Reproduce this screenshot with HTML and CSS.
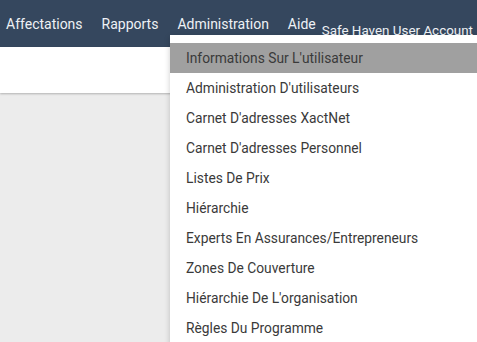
FILE: index.html
```html
<!DOCTYPE html>
<html lang="fr">
<head>
    <meta charset="UTF-8">
    <meta name="viewport" content="width=device-width, initial-scale=1.0">
    <title>Administration</title>
    <link rel="stylesheet" href="styles.css">
</head>
<body>
    <div class="topbar">
        <a class="nav-link">Affectations</a>
        <a class="nav-link">Rapports</a>
        <a class="nav-link">Administration</a>
        <a class="nav-link">Aide</a>
        <span class="account">Safe Haven User Account</span>
    </div>
    <div class="subbar"></div>
    <div class="content"></div>

    <ul class="dropdown">
        <li class="active">Informations Sur L'utilisateur</li>
        <li>Administration D'utilisateurs</li>
        <li>Carnet D'adresses XactNet</li>
        <li>Carnet D'adresses Personnel</li>
        <li>Listes De Prix</li>
        <li>Hiérarchie</li>
        <li>Experts En Assurances/Entrepreneurs</li>
        <li>Zones De Couverture</li>
        <li>Hiérarchie De L'organisation</li>
        <li>Règles Du Programme</li>
    </ul>
</body>
</html>
```

FILE: styles.css
```css
body {
    font-family: Roboto, 'Liberation Sans', sans-serif;
    margin: 0;
    background-color: #ececec;
    overflow: hidden;
    height: 342px;
}
.topbar {
    display: flex;
    align-items: center;
    height: 47px;
    padding-left: 6px;
    background: #35475e;
    white-space: nowrap;
}
.nav-link {
    color: #eef1f5;
    font-size: 14px;
    margin-right: 19px;
    cursor: pointer;
}
.account {
    color: #eef1f5;
    font-size: 13.4px;
    margin-left: -13px;
    padding-top: 13px;
}
.subbar {
    height: 46px;
    background: white;
    box-shadow: 0 1px 2px rgba(0,0,0,0.25);
}
.dropdown {
    position: absolute;
    top: 35px;
    left: 170px;
    width: 320px;
    margin: 0;
    padding: 8px 0;
    list-style: none;
    background: white;
    box-shadow: 0 2px 6px rgba(0,0,0,0.2);
}
.dropdown li {
    height: 30px;
    line-height: 30px;
    padding-left: 16px;
    font-size: 13.8px;
    color: #3a3a3a;
    white-space: nowrap;
}
.dropdown li.active {
    background: #a0a0a0;
}
```
